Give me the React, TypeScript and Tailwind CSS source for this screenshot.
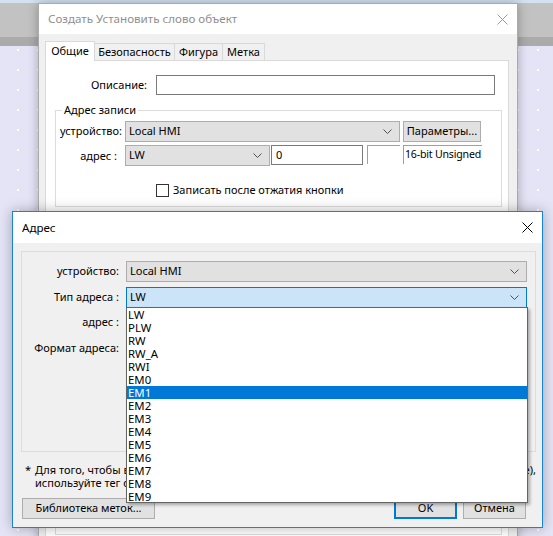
import React from 'react';

const font = "font-['Noto_Sans',sans-serif]";

function Chevron() {
  return (
    <svg width="9" height="5" viewBox="0 0 9 5">
      <polyline points="0.5,0.5 4.5,4.5 8.5,0.5" fill="none" stroke="#505050" strokeWidth="1" />
    </svg>
  );
}

function CloseIcon({ color }: { color: string }) {
  return (
    <svg width="11" height="11" viewBox="0 0 11 11">
      <path d="M0.5 0.5 L10.5 10.5 M10.5 0.5 L0.5 10.5" stroke={color} strokeWidth="1" fill="none" />
    </svg>
  );
}

function Select({ value, className = '' }: { value: string; className?: string }) {
  return (
    <div className={`flex items-center justify-between h-[21px] border border-[#adadad] bg-[#e1e1e1] pl-[3px] pr-[7px] ${className}`}>
      <span>{value}</span>
      <Chevron />
    </div>
  );
}

function Button({ label, className = '' }: { label: string; className?: string }) {
  return (
    <div className={`flex items-center justify-center h-[21px] border border-[#adadad] bg-[#e1e1e1] ${className}`}>
      {label}
    </div>
  );
}

const tabs = ['Безопасность', 'Фигура', 'Метка'];
const tabWidths = ['w-[80px]', 'w-[48px]', 'w-[42px]'];

const items = ['LW', 'PLW', 'RW', 'RW_A', 'RWI', 'EM0', 'EM1', 'EM2', 'EM3', 'EM4', 'EM5', 'EM6', 'EM7', 'EM8', 'EM9'];

function BackWindow() {
  return (
    <div className="absolute left-[38px] top-[3px] w-[480px] h-[560px] border border-[#aaaaaa] bg-[#f0f0f0] shadow-[0_0_10px_rgba(0,0,0,0.28)]">
      <div className="h-[30px] bg-white flex items-center justify-between pl-[9px] pr-[9px] text-[#8f8f8f] text-[11.6px]">
        <span>Создать Установить слово объект</span>
        <CloseIcon color="#9a9a9a" />
      </div>
      <div className="pl-[6px] pr-[8px] pt-[7px]">
        <div className="flex items-end h-[19px]">
          <div className="relative z-10 -mb-px h-[20px] w-[50px] bg-white border border-b-0 border-[#d9d9d9] flex items-center justify-center">
            Общие
          </div>
          {tabs.map((t, i) => (
            <div
              key={t}
              className={`h-[17px] ${tabWidths[i]} border-t border-r border-[#d9d9d9] flex items-center justify-center`}
            >
              {t}
            </div>
          ))}
        </div>
        <div className="bg-white border border-[#d9d9d9] h-[520px]">
          <div className="flex items-center mt-[14px]">
            <span className="w-[101px] text-right">Описание:</span>
            <div className="ml-[9px] w-[339px] h-[20px] border border-[#7a7a7a] bg-white" />
          </div>

          <fieldset className="mt-[7px] ml-[9px] mr-[6px] border border-[#dcdcdc] pb-[7px]">
            <legend className="ml-[6px] px-[2px] leading-[16px]">Адрес записи</legend>
            <div className="flex items-center mt-[3px]">
              <span className="w-[66px] text-right">устройство:</span>
              <Select value="Local HMI" className="ml-[3px] w-[275px]" />
              <Button label="Параметры..." className="ml-[3px] w-[78px] h-[20px]" />
            </div>
            <div className="flex items-start mt-[3px]">
              <span className="w-[61px] text-right leading-[21px]">адрес :</span>
              <Select value="LW" className="ml-[8px] w-[145px]" />
              <div className="ml-[1px] w-[92px] h-[20px] border border-[#7a7a7a] bg-white flex items-center pl-[4px]">0</div>
              <div className="ml-[4px] w-[33px] h-[19px] border-t border-l border-[#a0a0a0]" />
              <div className="ml-[3px] w-[79px] h-[19px] border-t border-l border-[#a0a0a0] pl-[1px] leading-[16px] whitespace-nowrap text-[10.6px] tracking-[-0.2px]">
                16-bit Unsigned
              </div>
            </div>
            <div className="flex items-center mt-[16px] ml-[100px]">
              <div className="w-[13px] h-[13px] border border-[#333333] bg-white" />
              <span className="ml-[4px]">Записать после отжатия кнопки</span>
            </div>
          </fieldset>

          <fieldset className="mt-[8px] ml-[9px] mr-[6px] h-[320px] border border-[#dcdcdc]" />
        </div>
      </div>
    </div>
  );
}

function AddressDialog() {
  return (
    <div className="absolute left-[12px] top-[211px] w-[531px] h-[317px] border border-[#1883d7] bg-[#f0f0f0] shadow-[0_0_12px_rgba(0,0,0,0.3)]">
      <div className="h-[31px] bg-white flex items-center justify-between pl-[9px] pr-[9px] text-[11.6px]">
        <span>Адрес</span>
        <CloseIcon color="#000000" />
      </div>

      <div className="mt-[8px] ml-[8px] mr-[6px] h-[201px] border border-[#dcdcdc]">
        <div className="flex items-center mt-[9px]">
          <span className="w-[97px] text-right">устройство:</span>
          <Select value="Local HMI" className="ml-[7px] w-[401px]" />
        </div>
        <div className="flex items-center mt-[5px]">
          <span className="w-[97px] text-right">Тип адреса :</span>
          <div className="ml-[7px] w-[401px] h-[21px] flex items-center justify-between border border-[#0078d7] bg-[#cce4f7] pl-[3px] pr-[7px]">
            <span>LW</span>
            <Chevron />
          </div>
        </div>
        <div className="flex items-center mt-[4px] h-[21px]">
          <span className="w-[97px] text-right">адрес :</span>
        </div>
        <div className="flex items-center mt-[5px] h-[21px]">
          <span className="w-[97px] text-right">Формат адреса:</span>
        </div>
      </div>

      <div className="mt-[11px] ml-[12px] mr-[6px] leading-[13px]">
        <div className="flex justify-between whitespace-nowrap">
          <div className="flex">
            <span className="w-[10px]">*</span>
            <span>Для того, чтобы в</span>
          </div>
          <span>e),</span>
        </div>
        <div className="pl-[10px] whitespace-nowrap">используйте тег о</div>
      </div>

      <div className="flex items-center mt-[9px] ml-[9px] mr-[16px]">
        <Button label="Библиотека меток..." className="w-[133px]" />
        <div className="ml-auto w-[63px] h-[21px] border-2 border-[#0078d7] bg-[#e1e1e1] flex items-center justify-center">
          OK
        </div>
        <Button label="Отмена" className="ml-[6px] w-[63px]" />
      </div>

      <div className="absolute left-[113px] top-[95px] w-[402px] h-[196px] border border-[#646464] bg-white shadow-[2px_2px_3px_rgba(0,0,0,0.3)] leading-[13px] text-[11.4px]">
        {items.map((it) => (
          <div
            key={it}
            className={`h-[13px] pl-[1px] ${it === 'EM1' ? 'bg-[#0078d7] text-white' : ''}`}
          >
            {it}
          </div>
        ))}
      </div>
    </div>
  );
}

export default function App() {
  return (
    <div className={`relative w-[553px] h-[536px] overflow-hidden bg-[#e4e4f6] text-[11px] text-black ${font}`}>
      <div className="h-[3px] bg-[#d3e1f0]" />
      <div className="h-[34px] bg-[#c2c2c2]" />
      <div className="h-[9px] bg-[#ababab]" />
      <div className="h-[490px] bg-[radial-gradient(circle,#ffffff_0.9px,transparent_1.2px)] bg-[size:20px_20px] bg-[position:8px_-6px]" />
      <BackWindow />
      <AddressDialog />
    </div>
  );
}
